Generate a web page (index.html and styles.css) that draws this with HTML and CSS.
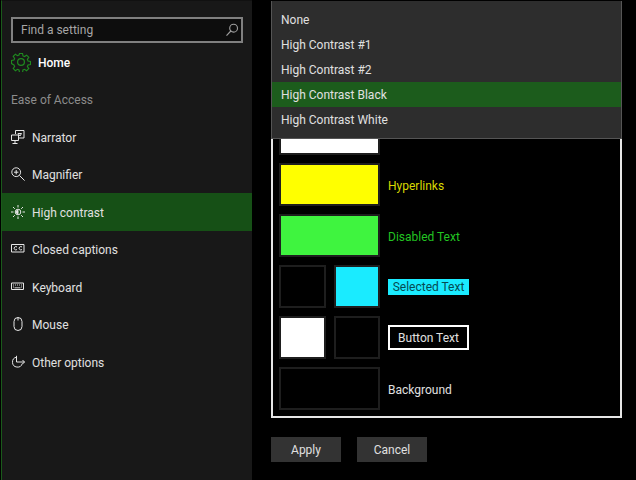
FILE: index.html
```html
<!DOCTYPE html>
<html lang="en">
<head>
    <meta charset="UTF-8">
    <title>Ease of Access - High contrast</title>
    <link rel="stylesheet" href="styles.css">
</head>
<body>

<div class="window">
    <!-- Sidebar -->
    <div class="sidebar">
        <div class="search">
            <span>Find a setting</span>
            <svg width="14" height="14" viewBox="0 0 14 14" fill="none" stroke="#a0a0a0" stroke-width="1.1">
                <circle cx="8.6" cy="5.2" r="3.9"/>
                <path d="M5.8 8L1.5 12.6"/>
            </svg>
        </div>

        <div class="home">
            <svg width="20" height="20" viewBox="0 0 20 20" fill="none" stroke="#1f8a1f" stroke-width="1.2">
                <circle cx="10" cy="10" r="3.4"/>
                <path d="M8.4 1h3.200l.5 2.600 1.600.7 2.200-1.500 2.300 2.300-1.500 2.200.7 1.600 2.600.5v3.200l-2.600.5-.7 1.600 1.500 2.200-2.300 2.300-2.200-1.500-1.600.7-.5 2.600H8.400l-.5-2.600-1.600-.7-2.200 1.500-2.300-2.300 1.500-2.200-.7-1.600L0 11.600V8.400l2.600-.5.7-1.600-1.500-2.200 2.300-2.300 2.200 1.500 1.600-.7z" transform="translate(.5 .5) scale(.95)"/>
            </svg>
            <span>Home</span>
        </div>

        <div class="section-title">Ease of Access</div>

        <div class="nav-item">
            <svg width="14" height="14" viewBox="0 0 14 14" fill="none" stroke="#e6e6e6">
                <path d="M4.5 4V.5h8.500v7.500H7.500"/>
                <path d="M.5 5h7v5.500h-7zM4 10.500v2.500M1.500 13.500h5"/>
                <path d="M7 3.500h3.500L9 6z"/>
            </svg>
            <span>Narrator</span>
        </div>
        <div class="nav-item">
            <svg width="14" height="14" viewBox="0 0 14 14" fill="none" stroke="#e6e6e6">
                <circle cx="5.200" cy="5.200" r="4.400"/>
                <path d="M8.400 8.400l5.200 5.200M3 5.200h4.400M5.200 3v4.400"/>
            </svg>
            <span>Magnifier</span>
        </div>
        <div class="nav-item active">
            <svg width="14" height="14" viewBox="0 0 14 14" fill="none" stroke="#e6e6e6">
                <circle cx="7" cy="7" r="2.800"/>
                <path d="M7 5.200a1.800 1.800 0 0 0 0 3.600z" fill="#e6e6e6"/>
                <path d="M7 0v2.500M7 11.500V14M0 7h2.500M11.500 7H14M2 2l1.800 1.800M10.200 10.200L12 12M2 12l1.800-1.800M10.200 3.800L12 2"/>
            </svg>
            <span>High contrast</span>
        </div>
        <div class="nav-item">
            <svg width="14" height="14" viewBox="0 0 14 14" fill="none" stroke="#e6e6e6">
                <path d="M.5 2.500h12.500v7.500H.5z"/>
                <path d="M6 5a1.700 1.700 0 1 0 0 2.500M11 5a1.700 1.700 0 1 0 0 2.500"/>
            </svg>
            <span>Closed captions</span>
        </div>
        <div class="nav-item">
            <svg width="14" height="14" viewBox="0 0 14 14" fill="none" stroke="#e6e6e6">
                <path d="M.5 3h12v6.500H.5z"/>
                <path d="M2 5h1M4 5h1M6 5h1M8 5h1M10 5h1M2 7h1M10 7h1M3.500 7.800h6" stroke-width=".9"/>
            </svg>
            <span>Keyboard</span>
        </div>
        <div class="nav-item">
            <svg width="14" height="14" viewBox="0 0 14 14" fill="none" stroke="#e6e6e6">
                <path d="M3 4.500a4 4 0 0 1 8 0v5a4 4 0 0 1-8 0z"/>
                <path d="M7 .5v3"/>
            </svg>
            <span>Mouse</span>
        </div>
        <div class="nav-item">
            <svg width="14" height="14" viewBox="0 0 14 14" fill="none" stroke="#e6e6e6">
                <path d="M5.500 2.200a5 5 0 1 0 5.800 6.300"/>
                <path d="M5.500 .8v6.200h8M11.500 5l2 2-2 2"/>
            </svg>
            <span>Other options</span>
        </div>
    </div>

    <!-- Main content -->
    <div class="main">
        <div class="dropdown">
            <div class="option">None</div>
            <div class="option">High Contrast #1</div>
            <div class="option">High Contrast #2</div>
            <div class="option selected">High Contrast Black</div>
            <div class="option">High Contrast White</div>
        </div>

        <div class="preview">
            <div class="row">
                <div class="swatches"><div class="swatch white"></div></div>
            </div>
            <div class="row">
                <div class="swatches"><div class="swatch yellow"></div></div>
                <span class="label text-yellow">Hyperlinks</span>
            </div>
            <div class="row">
                <div class="swatches"><div class="swatch green"></div></div>
                <span class="label text-green">Disabled Text</span>
            </div>
            <div class="row">
                <div class="swatches"><div class="swatch"></div><div class="swatch cyan"></div></div>
                <span class="label selected-text">Selected Text</span>
            </div>
            <div class="row">
                <div class="swatches"><div class="swatch white"></div><div class="swatch"></div></div>
                <span class="label button-text">Button Text</span>
            </div>
            <div class="row">
                <div class="swatches"><div class="swatch"></div></div>
                <span class="label">Background</span>
            </div>
        </div>

        <div class="actions">
            <div class="btn">Apply</div>
            <div class="btn">Cancel</div>
        </div>
    </div>
</div>

</body>
</html>
```

FILE: styles.css
```css
html, body {
    margin: 0;
    padding: 0;
    height: 100%;
}

body {
    background: #000;
    color: #e0e0e0;
    font-family: "Roboto", sans-serif;
    font-size: 12px;
    overflow: hidden;
}

.window {
    display: flex;
    height: 480px;
}

/* Sidebar */
.sidebar {
    width: 251px;
    box-sizing: border-box;
    margin-left: 1px;
    padding-top: 16px;
    background: #181818;
    border-left: 1px solid #1a5a1a;
    border-top: 1px solid #111;
}

.search {
    display: flex;
    align-items: center;
    justify-content: space-between;
    box-sizing: border-box;
    width: 232px;
    height: 26px;
    margin-left: 9px;
    padding: 0 2px 0 8px;
    border: 2px solid #808080;
    background: #0d0d0d;
    color: #a6a6a6;
}

.home {
    display: flex;
    align-items: center;
    gap: 7px;
    height: 20px;
    margin: 9px 0 0 9px;
    color: #fff;
    font-weight: 500;
}

.section-title {
    margin: 18px 0 10px 9px;
    height: 18px;
    line-height: 20px;
    color: #8c8c8c;
}

.nav-item {
    display: flex;
    align-items: center;
    gap: 7px;
    height: 37.5px;
    padding-left: 9px;
}

.nav-item span, .home span, .row .label {
    line-height: 18px;
    padding-top: 2px;
}

.nav-item.active {
    background: #165016;
}

/* Main */
.main {
    position: relative;
    flex: 1;
    padding: 104px 14px 0 19px;
}

.dropdown {
    position: absolute;
    top: 1px;
    left: 19px;
    width: 351px;
    box-sizing: border-box;
    padding: 6px 0;
    background: #2d2d2d;
    border: 1px solid #555;
    border-width: 0 1px 1px;
}

.option {
    height: 25px;
    line-height: 27px;
    padding-left: 9px;
}

.option.selected {
    background: #1c5c1c;
}

.preview {
    display: flex;
    flex-direction: column;
    gap: 8px;
    padding: 6px;
    border: 2px solid #e6e6e6;
}

.row {
    display: flex;
    align-items: center;
    gap: 8px;
}

.swatches {
    display: flex;
    gap: 8px;
    width: 101px;
    height: 43px;
}

.swatch {
    flex: 1;
    box-sizing: border-box;
    border: 2px solid #1e1e1e;
}

.white { background: #fff; }
.yellow { background: #ff0; }
.green { background: #3ff43f; }
.cyan { background: #1aebff; }

.text-yellow { color: #d9d900; }
.text-green { color: #22c422; }

.row .selected-text {
    box-sizing: border-box;
    width: 81px;
    height: 16px;
    padding-top: 0;
    line-height: 17px;
    text-align: center;
    background: #1aebff;
    color: #064a52;
}

.row .button-text {
    box-sizing: border-box;
    width: 81px;
    height: 25px;
    padding-top: 0;
    line-height: 23px;
    text-align: center;
    border: 2px solid #fff;
}

.actions {
    display: flex;
    gap: 16px;
    margin-top: 19px;
}

.btn {
    width: 70px;
    height: 25px;
    line-height: 27px;
    text-align: center;
    background: #333;
}
```
